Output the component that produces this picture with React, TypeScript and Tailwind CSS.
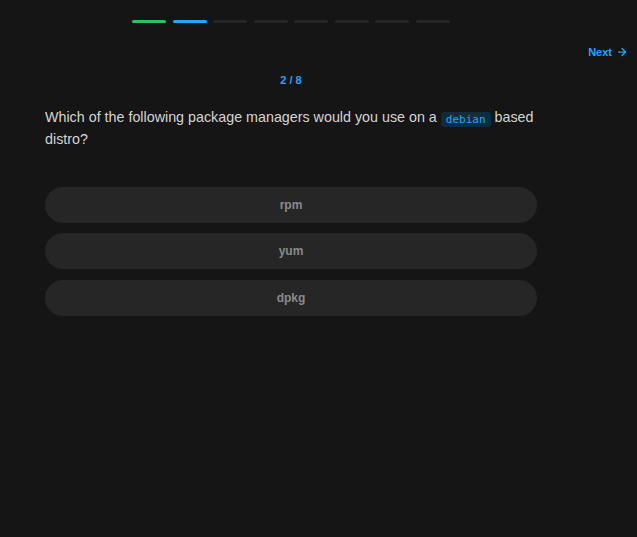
import { ArrowRight } from "lucide-react";

const options = ["rpm", "yum", "dpkg"];
const total = 8;
const current = 2;

export default function App() {
  return (
    <div
      className="min-h-[537px] w-full bg-[#151515] text-[#d4d4d4]"
      style={{ fontFamily: "'Liberation Sans', Arial, sans-serif" }}
    >
      <div className="flex justify-between">
        <div className="ml-[45px] w-[492px]">
          {/* Progress */}
          <div className="flex justify-center gap-[6.5px] pt-[20px]">
            {Array.from({ length: total }).map((_, i) => (
              <div
                key={i}
                className={
                  i === 0
                    ? "h-[3px] w-[34px] rounded-full bg-[#22c55e]"
                    : i === 1
                    ? "h-[3px] w-[34px] rounded-full bg-[#1ea7fd]"
                    : "h-[3px] w-[34px] rounded-full bg-[#262626]"
                }
              />
            ))}
          </div>

          <p className="mt-[49px] text-center text-[11px] font-bold text-[#1ea7fd]">
            {current} / {total}
          </p>

          <p className="mt-[17px] text-[14.3px] leading-[22px] text-[#d4d4d4]">
            Which of the following package managers would you use on a{" "}
            <code
              className="inline-block rounded-[3px] bg-[#0c2d40] px-[5px] text-[11px] leading-[15px] text-[#1ea7fd] align-[-1px]"
              style={{ fontFamily: "'DejaVu Sans Mono', monospace" }}
            >
              debian
            </code>{" "}
            based distro?
          </p>

          <div className="mt-[37px] flex flex-col gap-[10.5px]">
            {options.map((o) => (
              <button
                key={o}
                className="h-[36px] w-full rounded-full bg-[#262626] text-[12px] font-bold text-[#8a8a8a]"
              >
                {o}
              </button>
            ))}
          </div>
        </div>

        <div className="pr-[9px] pt-[44px]">
          <button className="flex items-center gap-[4px] text-[11px] font-bold text-[#1ea7fd]">
            Next
            <ArrowRight className="h-[12px] w-[12px]" strokeWidth={2.5} />
          </button>
        </div>
      </div>
    </div>
  );
}
